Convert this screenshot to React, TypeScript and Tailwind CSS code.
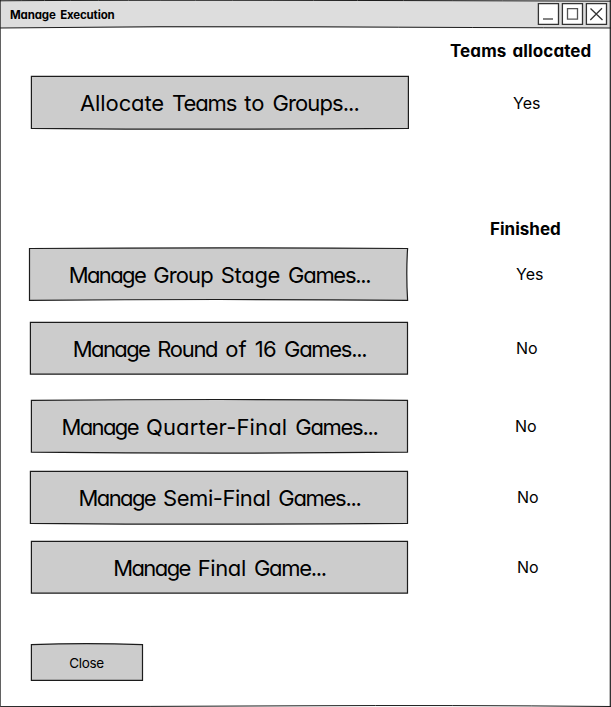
type Word = [text: string, tracking: string];

type Action = {
  words: Word[];
  row: string;
  outline: string;
  status: string;
  statusPos: string;
};

const manage: Word = ["Manage", "tracking-[-1.6px]"];
const games: Word = ["Games...", "tracking-[-1.3px]"];

const allocate: Action = {
  words: [
    ["Allocate", "tracking-[-0.1px]"],
    ["Teams", "tracking-[-1.1px]"],
    ["to", "tracking-[0px]"],
    ["Groups...", "tracking-[-0.9px]"],
  ],
  row: "mt-[11px]",
  outline: "M1.4 1.4 Q190 1.2 378.4 1.4 L378.4 53.3 Q190 55 1.4 53.3 Z",
  status: "Yes",
  statusPos: "ml-[104px] w-[28px] leading-[57px]",
};

const stages: Action[] = [
  {
    words: [manage, ["Group", "tracking-[-0.9px]"], ["Stage", "tracking-[-0.3px]"], games],
    row: "mt-[6px]",
    outline: "M-0.5 1.5 Q190 0.4 377.6 1.5 Q376 26 377.6 53.4 Q190 51.6 -0.5 53.4 Z",
    status: "Yes",
    statusPos: "ml-[107px] w-[28px] leading-[54px]",
  },
  {
    words: [manage, ["Round", "tracking-[-1.3px]"], ["of", "tracking-[0px]"], ["16", "tracking-[-0.6px]"], games],
    row: "mt-[18px]",
    outline: "M0.4 1.4 Q190 1.2 377.5 1.4 L377.5 53.2 Q190 53.8 0.4 53.2 Z",
    status: "No",
    statusPos: "ml-[107px] w-[28px] leading-[55px]",
  },
  {
    words: [manage, ["Quarter-Final", "tracking-[0.15px]"], games],
    row: "mt-[22px]",
    outline: "M1.4 1.4 Q190 -0.4 377.5 1.4 L377.5 53.2 Q190 55 1.4 53.2 Z",
    status: "No",
    statusPos: "ml-[106px] w-[28px] leading-[55px]",
  },
  {
    words: [manage, ["Semi-Final", "tracking-[-0.45px]"], games],
    row: "mt-[15px]",
    outline: "M0.4 1.4 Q190 1.2 377.5 1.4 L377.5 53.3 Q190 55 0.4 53.3 Z",
    status: "No",
    statusPos: "ml-[108px] w-[28px] leading-[55px]",
  },
  {
    words: [manage, ["Final", "tracking-[-0.4px]"], ["Game...", "tracking-[-1.3px]"]],
    row: "mt-[14px]",
    outline: "M1.4 1.4 Q190 1 377.5 1.4 L377.5 53.2 Q190 52.6 1.4 53.2 Z",
    status: "No",
    statusPos: "ml-[108px] w-[28px] leading-[55px]",
  },
];

function ActionRow({ words, row, outline, status, statusPos }: Action) {
  return (
    <div className={`flex h-[56px] pl-[30px] ${row}`}>
      <button className="relative h-[55px] w-[379px] shrink-0">
        <svg className="absolute inset-0 h-full w-full overflow-visible" viewBox="0 0 379 55">
          <path d={outline} fill="#ccc" stroke="#1c1c1c" strokeWidth="1.2" />
        </svg>
        <span className="relative flex justify-center gap-[8px] whitespace-nowrap text-[22px] leading-[56px]">
          {words.map(([text, tracking]) => (
            <span key={text} className={tracking}>
              {text}
            </span>
          ))}
        </span>
      </button>
      <span className={`whitespace-nowrap text-left text-[16px] ${statusPos}`}>{status}</span>
    </div>
  );
}

function TitleBar() {
  return (
    <header className="relative flex h-[28px] shrink-0 items-center justify-between bg-[#ddd] pl-[10px] pr-[3px]">
      <svg className="absolute inset-0 h-full w-full overflow-visible" viewBox="0 0 611 28" fill="none" stroke="#1c1c1c">
        <path d="M0 0.8 Q160 -0.4 611 1.2 M0 28 Q160 26 320 26.8 T611 28" />
      </svg>
      <h1 className="relative whitespace-nowrap pt-px text-[11.5px] font-bold leading-[28px] tracking-[-0.15px] [word-spacing:2px]">
        Manage Execution
      </h1>
      <svg className="relative h-[24px] w-[72px]" viewBox="536 2 72 24" stroke="#333" fill="none">
        <g fill="#fff" strokeWidth="1.3">
          <path d="M538.4 3.6H558.5V24.3H538.4Z" />
          <path d="M562.4 3.6H582.5V24.3H562.4Z" />
          <path d="M586.4 3.6H606.5V24.3H586.4Z" />
        </g>
        <path d="M543 19H553" stroke="#777" strokeWidth="1.8" />
        <path d="M567.5 8.7H577.5V19.2H567.5Z" stroke="#555" strokeWidth="1.3" />
        <path d="M590.5 8.5L602.5 20M602 8.3L590.3 20" strokeWidth="1.3" />
      </svg>
    </header>
  );
}

export default function App() {
  return (
    <main className="relative flex h-[707px] w-[611px] flex-col overflow-hidden bg-white font-['Inter','Noto_Sans',sans-serif] text-black [font-feature-settings:'cv11','ss03']">
      <TitleBar />
      <h2 className="ml-[450px] mt-[12px] h-[24px] whitespace-nowrap text-[17px] font-bold leading-[22px] tracking-[0.1px] [word-spacing:2px]">
        Teams allocated
      </h2>
      <ActionRow {...allocate} />
      <h2 className="ml-[490px] mt-[86px] h-[24px] whitespace-nowrap text-[17px] font-bold leading-[24px]">
        Finished
      </h2>
      {stages.map((stage) => (
        <ActionRow key={stage.outline} {...stage} />
      ))}
      <button className="relative ml-[30px] mt-[47px] h-[39px] w-[114px]">
        <svg className="absolute inset-0 h-full w-full overflow-visible" viewBox="0 0 114 39">
          <path d="M1.4 1.6 Q56 -0.4 112.5 1.6 V37.4 H1.4 Z" fill="#ccc" stroke="#1c1c1c" strokeWidth="1.2" />
        </svg>
        <span className="relative block pr-[1px] text-[13.5px] leading-[41px] tracking-[-0.35px]">Close</span>
      </button>
      <svg className="pointer-events-none absolute inset-0 h-full w-full" viewBox="0 0 611 707" fill="none" stroke="#1c1c1c">
        <path d="M0.2 0V706.6 Q150 706.6 300 705.8 T611 706.5" />
        <path d="M610.3 0Q611 350 610.3 707" strokeWidth="1.2" />
      </svg>
    </main>
  );
}
